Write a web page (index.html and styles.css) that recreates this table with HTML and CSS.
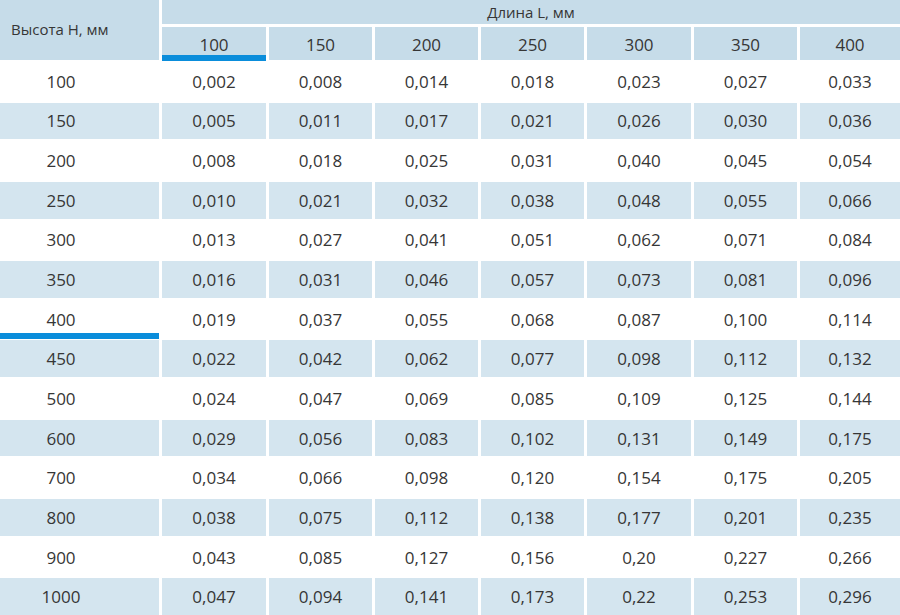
FILE: index.html
```html
<!DOCTYPE html>
<html lang="ru">
<head>
<meta charset="utf-8">
<title>Таблица</title>
<link rel="stylesheet" href="styles.css">
</head>
<body>
<div class="table">
  <div class="hcell hcorner">Высота Н, мм</div>
  <div class="hcell hspan">Длина L, мм</div>
  <div class="hcell hnum active">100</div>
  <div class="hcell hnum">150</div>
  <div class="hcell hnum">200</div>
  <div class="hcell hnum">250</div>
  <div class="hcell hnum">300</div>
  <div class="hcell hnum">350</div>
  <div class="hcell hnum">400</div>

  <div class="cell first">100</div><div class="cell">0,002</div><div class="cell">0,008</div><div class="cell">0,014</div><div class="cell">0,018</div><div class="cell">0,023</div><div class="cell">0,027</div><div class="cell">0,033</div>
  <div class="cell first alt">150</div><div class="cell alt">0,005</div><div class="cell alt">0,011</div><div class="cell alt">0,017</div><div class="cell alt">0,021</div><div class="cell alt">0,026</div><div class="cell alt">0,030</div><div class="cell alt">0,036</div>
  <div class="cell first">200</div><div class="cell">0,008</div><div class="cell">0,018</div><div class="cell">0,025</div><div class="cell">0,031</div><div class="cell">0,040</div><div class="cell">0,045</div><div class="cell">0,054</div>
  <div class="cell first alt">250</div><div class="cell alt">0,010</div><div class="cell alt">0,021</div><div class="cell alt">0,032</div><div class="cell alt">0,038</div><div class="cell alt">0,048</div><div class="cell alt">0,055</div><div class="cell alt">0,066</div>
  <div class="cell first">300</div><div class="cell">0,013</div><div class="cell">0,027</div><div class="cell">0,041</div><div class="cell">0,051</div><div class="cell">0,062</div><div class="cell">0,071</div><div class="cell">0,084</div>
  <div class="cell first alt">350</div><div class="cell alt">0,016</div><div class="cell alt">0,031</div><div class="cell alt">0,046</div><div class="cell alt">0,057</div><div class="cell alt">0,073</div><div class="cell alt">0,081</div><div class="cell alt">0,096</div>
  <div class="cell first active">400</div><div class="cell">0,019</div><div class="cell">0,037</div><div class="cell">0,055</div><div class="cell">0,068</div><div class="cell">0,087</div><div class="cell">0,100</div><div class="cell">0,114</div>
  <div class="cell first alt">450</div><div class="cell alt">0,022</div><div class="cell alt">0,042</div><div class="cell alt">0,062</div><div class="cell alt">0,077</div><div class="cell alt">0,098</div><div class="cell alt">0,112</div><div class="cell alt">0,132</div>
  <div class="cell first">500</div><div class="cell">0,024</div><div class="cell">0,047</div><div class="cell">0,069</div><div class="cell">0,085</div><div class="cell">0,109</div><div class="cell">0,125</div><div class="cell">0,144</div>
  <div class="cell first alt">600</div><div class="cell alt">0,029</div><div class="cell alt">0,056</div><div class="cell alt">0,083</div><div class="cell alt">0,102</div><div class="cell alt">0,131</div><div class="cell alt">0,149</div><div class="cell alt">0,175</div>
  <div class="cell first">700</div><div class="cell">0,034</div><div class="cell">0,066</div><div class="cell">0,098</div><div class="cell">0,120</div><div class="cell">0,154</div><div class="cell">0,175</div><div class="cell">0,205</div>
  <div class="cell first alt">800</div><div class="cell alt">0,038</div><div class="cell alt">0,075</div><div class="cell alt">0,112</div><div class="cell alt">0,138</div><div class="cell alt">0,177</div><div class="cell alt">0,201</div><div class="cell alt">0,235</div>
  <div class="cell first">900</div><div class="cell">0,043</div><div class="cell">0,085</div><div class="cell">0,127</div><div class="cell">0,156</div><div class="cell">0,20</div><div class="cell">0,227</div><div class="cell">0,266</div>
  <div class="cell first alt">1000</div><div class="cell alt">0,047</div><div class="cell alt">0,094</div><div class="cell alt">0,141</div><div class="cell alt">0,173</div><div class="cell alt">0,22</div><div class="cell alt">0,253</div><div class="cell alt">0,296</div>
</div>
</body>
</html>
```
FILE: styles.css
```css
html, body {
  margin: 0;
  padding: 0;
  background: #ffffff;
}
body {
  font-family: "Open Sans", "Noto Sans", "DejaVu Sans", sans-serif;
  color: #363636;
  width: 900px;
  height: 615px;
  overflow: hidden;
}
.table {
  display: grid;
  grid-template-columns: 159px 104px 103px 103px 103px 104px 103px 1fr;
  grid-template-rows: 24px 33px repeat(14, 1fr);
  gap: 3px;
  width: 900px;
  height: 615px;
}
.hcell {
  background: #c6dce9;
  display: flex;
  align-items: center;
  justify-content: center;
}
.hcorner {
  grid-row: 1 / span 2;
  grid-column: 1;
  justify-content: flex-start;
  padding-left: 11px;
  padding-bottom: 2px;
  font-size: 15px;
}
.hspan {
  grid-column: 2 / span 7;
  font-size: 15px;
}
.hnum {
  font-size: 17px;
  padding-top: 1px;
}
.hnum.active {
  box-shadow: inset 0 -5px 0 #0a8ddb, 0 1px 0 #0a8ddb;
}
.cell {
  display: flex;
  align-items: center;
  justify-content: center;
  font-size: 17px;
  background: #ffffff;
}
.cell.alt {
  background: #d4e5ef;
}
.cell.first {
  padding-right: 37px;
}
.cell.first.active {
  box-shadow: inset 0 -4px 0 #0a8ddb, 0 2px 0 #0a8ddb;
}
```
